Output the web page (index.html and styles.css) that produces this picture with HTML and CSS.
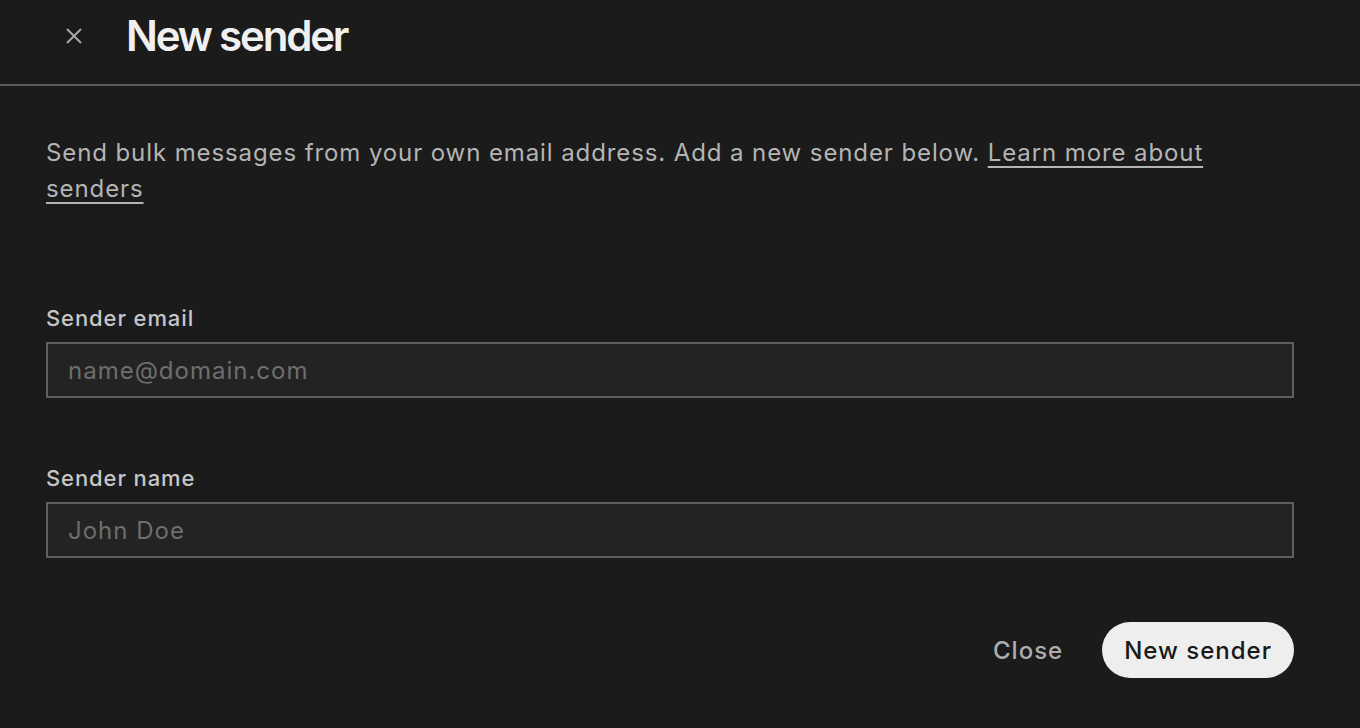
FILE: index.html
```html
<!DOCTYPE html>
<html lang="en">
<head>
<meta charset="utf-8">
<title>New sender</title>
<link rel="stylesheet" href="styles.css">
</head>
<body>
<div class="dialog">
  <header class="header">
    <button class="icon-btn" aria-label="Close">
      <svg width="18" height="18" viewBox="0 0 18 18"><path d="M2 2L16 16M16 2L2 16" stroke="#a8a8a8" stroke-width="2" stroke-linecap="butt"/></svg>
    </button>
    <h1 class="title">New sender</h1>
  </header>
  <main class="content">
    <p class="intro">Send bulk messages from your own email address. Add a new sender below. <a href="#" class="link">Learn more about senders</a></p>
    <div class="field first">
      <label class="label" for="email">Sender email</label>
      <input class="input" id="email" type="text" placeholder="name@domain.com">
    </div>
    <div class="field">
      <label class="label" for="name">Sender name</label>
      <input class="input" id="name" type="text" placeholder="John Doe">
    </div>
    <div class="actions">
      <button class="btn-text">Close</button>
      <button class="btn-primary">New sender</button>
    </div>
  </main>
</div>
</body>
</html>
```

FILE: styles.css
```css
* { box-sizing: border-box; }
html, body {
  margin: 0;
  padding: 0;
  background: #1b1b1b;
  font-family: Inter, "Noto Sans", sans-serif;
}
.dialog {
  width: 1360px;
  height: 728px;
  background: #1b1b1b;
}
.header {
  height: 86px;
  border-bottom: 2px solid #5a5a5a;
  display: flex;
  align-items: center;
  padding: 0 0 12px 56px;
}
.icon-btn {
  width: 36px;
  height: 36px;
  border: 0;
  background: none;
  padding: 0;
  display: flex;
  align-items: center;
  justify-content: center;
  margin-right: 34px;
  cursor: pointer;
}
.title {
  margin: 0;
  font-size: 42px;
  font-weight: 600;
  letter-spacing: -2.2px;
  color: #f0f0f0;
  line-height: 1;
}
.content {
  padding: 49px 66px 0 46px;
}
.intro {
  margin: 0;
  font-size: 24px;
  line-height: 36px;
  letter-spacing: 0.9px;
  color: #b4b4b4;
}
.link {
  color: #b4b4b4;
  text-decoration: underline;
  text-underline-offset: 5px;
  text-decoration-thickness: 2px;
}
.field {
  display: flex;
  flex-direction: column;
  margin-top: 62px;
}
.field.first { margin-top: 93px; }
.label {
  font-size: 22px;
  line-height: 36px;
  font-weight: 500;
  letter-spacing: 0.9px;
  color: #c6c6c6;
  margin-bottom: 6px;
}
.input {
  height: 56px;
  background: #232323;
  border: 2px solid #5f5f5f;
  border-radius: 0;
  padding: 0 20px;
  font-family: inherit;
  font-size: 24px;
  letter-spacing: 1px;
  color: #e0e0e0;
  outline: none;
}
.input::placeholder { color: #6e6e6e; }
.actions {
  display: flex;
  justify-content: flex-end;
  align-items: center;
  gap: 18px;
  margin-top: 64px;
}
.btn-text {
  background: none;
  border: 0;
  font-family: inherit;
  font-size: 24px;
  font-weight: 500;
  letter-spacing: 1px;
  color: #adadad;
  padding: 0 21px;
  height: 56px;
  cursor: pointer;
}
.btn-primary {
  height: 56px;
  border-radius: 28px;
  border: 0;
  background: #eeeeee;
  color: #1a1a1a;
  font-family: inherit;
  font-size: 24px;
  font-weight: 500;
  letter-spacing: 1px;
  padding: 0 22px;
  cursor: pointer;
}
```
